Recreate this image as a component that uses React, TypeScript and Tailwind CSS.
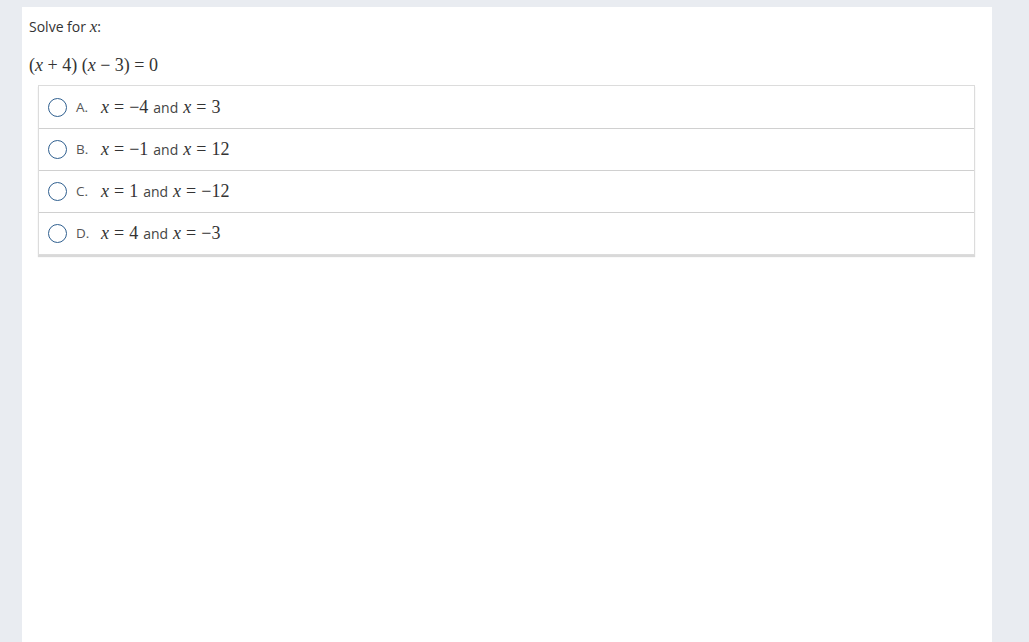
const serif = "font-['Liberation_Serif',serif]";

function Eq({ l, r }: { l: string; r: string }) {
  return (
    <span className={`${serif} text-[18px] text-[#333]`}>
      <span className="italic">{l}</span>
      <span className="mx-[5px]">=</span>
      {r}
    </span>
  );
}

const options: { key: string; a: string; b: string }[] = [
  { key: "A.", a: "\u22124", b: "3" },
  { key: "B.", a: "\u22121", b: "12" },
  { key: "C.", a: "1", b: "\u221212" },
  { key: "D.", a: "4", b: "\u22123" },
];

export default function App() {
  return (
    <div className="min-h-[642px] bg-[#e9ecf1] pt-[7px] font-['Open_Sans',sans-serif] text-[#333]">
      <div className="ml-[22px] w-[970px] min-h-[635px] bg-white px-[7px] pt-[10px]">
        <p className="text-[14px] leading-5">
          Solve for <span className={`${serif} italic text-[17px]`}>x</span>:
        </p>
        <p className={`${serif} mt-[16px] text-[18px] leading-6 text-[#333]`}>
          (<span className="italic">x</span> + 4) (<span className="italic">x</span> − 3) = 0
        </p>
        <div className="ml-[9px] mr-[10px] mt-[8px] border border-[#dcdcdc] shadow-[0_2px_1px_rgba(0,0,0,0.15)]">
          {options.map((o, i) => (
            <div key={o.key} className={`flex h-[42px] items-center pl-[9px] ${i > 0 ? "border-t border-[#d0d0d0]" : ""}`}>
              <span className="h-[19px] w-[19px] rounded-full border-[1.5px] border-[#2f5f8f]" />
              <span className="ml-[9px] w-[25px] text-[13.5px] text-[#555]">{o.key}</span>
              <span className="flex items-baseline gap-[5px]">
                <Eq l="x" r={o.a} />
                <span className="text-[14px] text-[#444]">and</span>
                <Eq l="x" r={o.b} />
              </span>
            </div>
          ))}
        </div>
      </div>
    </div>
  );
}
